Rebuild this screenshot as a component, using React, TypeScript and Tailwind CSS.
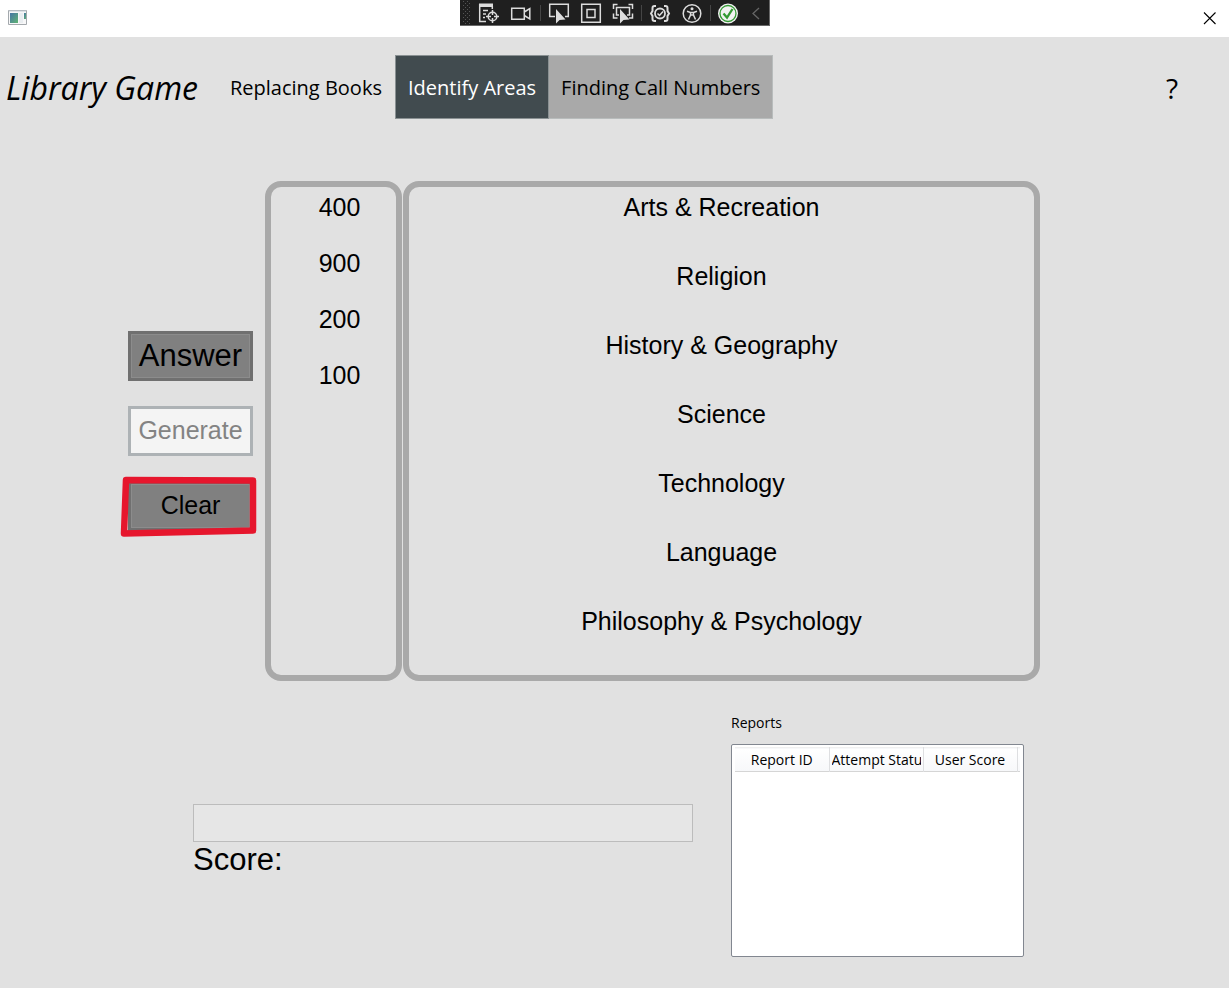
import React from "react";

const callNumbers = ["400", "900", "200", "100"];

const areas = [
  "Arts & Recreation",
  "Religion",
  "History & Geography",
  "Science",
  "Technology",
  "Language",
  "Philosophy & Psychology",
];

const columns = ["Report ID", "Attempt Status", "User Score"];

const segoe = "font-['Open_Sans','Noto_Sans',sans-serif]";
const arial = "font-['Liberation_Sans',Arial,sans-serif]";

function ToolButton({ label, children }: { label: string; children: React.ReactNode }) {
  return (
    <button type="button" aria-label={label} className="flex h-6 w-8 items-center justify-center">
      <svg width="24" height="24" viewBox="0 0 24 24" fill="none" stroke="#dcdcdc" strokeWidth="1.5">
        {children}
      </svg>
    </button>
  );
}

function Separator() {
  return (
    <span className="flex h-4 w-[5px] shrink-0 justify-center">
      <span className="w-px bg-[#454545]" />
    </span>
  );
}

function Grip() {
  const rows = [2, 6, 10, 14, 18, 22];
  return (
    <svg className="h-6 w-3.5 shrink-0" viewBox="0 0 14 24" fill="#555555" aria-hidden="true">
      {rows.map((y) => (
        <g key={y}>
          <rect x="3" y={y - 2} width="1" height="1" />
          <rect x="7" y={y - 2} width="1" height="1" />
          <rect x="5" y={y} width="1" height="1" />
          <rect x="9" y={y} width="1" height="1" />
        </g>
      ))}
    </svg>
  );
}

const cursor = "M9 8V22.5L12.5 19L18.5 18.5Z";

function DebugToolbar() {
  return (
    <div
      role="toolbar"
      aria-label="Debug tools"
      className="flex h-[26px] items-center border-r border-b border-[#686868] bg-[#1f1f1f]"
    >
      <Grip />
      <ToolButton label="Go to live visual tree">
        <path d="M1 2.500H15V6H1Z" fill="#dcdcdc" stroke="none" />
        <path d="M1.700 3V20.500H8M5 9.500H10M5 13H8M5 16.500H7M14.300 5V8" />
        <circle cx="14.500" cy="15.500" r="4.300" />
        <path d="M14.500 9V14M14.500 17V22M8 15.500H13M16 15.500H21" />
      </ToolButton>
      <ToolButton label="Record">
        <path d="M1.700 7.200H14.300V18.300H1.700ZM14.300 11L19.800 7.500V18L14.300 14.500" />
      </ToolButton>
      <Separator />
      <ToolButton label="Select element">
        <path d="M8 15.500H2.700V3.200H21.300V15.500H18" />
        <path d={cursor} fill="#dcdcdc" stroke="none" />
      </ToolButton>
      <ToolButton label="Display layout adorners">
        <path d="M2.700 3.200H21.300V21.300H2.700ZM8 8.500H16V16.500H8Z" />
      </ToolButton>
      <ToolButton label="Track focused element">
        <path d="M2.500 8V3.500H6.500M17.500 3.500H21.500V8M2.500 12.500V17H6.500M18 17H21.500V12.500M8 14H5.500V6.500H18.500V14H16" />
        <path d={cursor} fill="#dcdcdc" stroke="none" />
      </ToolButton>
      <Separator />
      <ToolButton label="Binding failures">
        <path
          d="M8 5H6.500Q4.500 5 4.500 7V10L3 12.500L4.500 15V18Q4.500 20 6.500 20H8M16 5H17.500Q19.500 5 19.500 7V10L21 12.500L19.500 15V18Q19.500 20 17.500 20H16"
          strokeWidth="2"
        />
        <circle cx="12" cy="12.500" r="5" strokeWidth="1.800" />
        <path d="M9.500 12.500L11.500 14.500L15 10.500" />
      </ToolButton>
      <ToolButton label="Scan for accessibility issues">
        <circle cx="12" cy="12.500" r="8.800" />
        <circle cx="12" cy="7.700" r="1.500" fill="#dcdcdc" stroke="none" />
        <path d="M7 10.200L10.500 11.500V14L8.500 18.500M17 10.200L13.500 11.500V14L15.500 18.500M10.500 11.500H13.500M10.500 14H13.500" />
      </ToolButton>
      <Separator />
      <ToolButton label="Hot reload">
        <circle cx="11" cy="12.500" r="10" fill="#f2f2f2" stroke="none" />
        <circle cx="11" cy="12.500" r="8" stroke="#339933" strokeWidth="1.300" />
        <path d="M6.500 12.500L10 16.500L15.500 8" stroke="#339933" strokeWidth="2.300" />
      </ToolButton>
      <button type="button" aria-label="Collapse toolbar" className="flex h-6 w-6 items-center justify-center">
        <svg width="12" height="14" viewBox="0 0 12 14" fill="none" stroke="#666666" strokeWidth="1.3">
          <path d="M8 2L2 7.500L8 13" />
        </svg>
      </button>
    </div>
  );
}

function TitleBar() {
  return (
    <div className="grid h-[37px] grid-cols-[1fr_auto_1fr] bg-white">
      <svg className="mt-2.5 ml-2" width="20" height="16" viewBox="0 0 20 16" aria-hidden="true">
        <defs>
          <linearGradient id="pane" x1="0" y1="0" x2="1" y2="1">
            <stop offset="0" stopColor="#4675a5" />
            <stop offset="1" stopColor="#60b473" />
          </linearGradient>
        </defs>
        <path d="M0.500 0.500H18.500V14.500H0.500Z" fill="#f7f7f8" stroke="#a4a9ad" />
        <path d="M1 1H18" stroke="#c5cdd4" />
        <rect x="2" y="3" width="8" height="10" fill="url(#pane)" />
        <rect x="11" y="3" width="4" height="10" fill="#e9edf0" />
        <rect x="16" y="3" width="2" height="6" fill="url(#pane)" />
      </svg>
      <DebugToolbar />
      <button type="button" aria-label="Close" className="mt-3 mr-3 h-3.5 w-3.5 justify-self-end">
        <svg width="14" height="14" viewBox="0 0 14 14" stroke="#000000" strokeWidth="1.1">
          <path d="M1 0.500L12.500 12M12.500 0.500L1 12" />
        </svg>
      </button>
    </div>
  );
}

const navItem = "h-full px-3 pt-0.5 text-xl leading-8 whitespace-nowrap";

function Header() {
  return (
    <header className={`mt-[18px] flex h-16 items-center ${segoe}`}>
      <h1 className="ml-1.5 w-[212px] pt-0.5 text-[32px] leading-10 whitespace-nowrap italic">Library Game</h1>
      <nav className="flex h-full">
        <button type="button" className={`${navItem} pr-[13px]`}>
          Replacing Books
        </button>
        <button
          type="button"
          aria-current="page"
          className={`${navItem} border border-[#8a9193] bg-[#414b4f] text-white`}
        >
          Identify Areas
        </button>
        <button type="button" className={`${navItem} border border-l-0 border-[#b8bcbc] bg-[#a9a9a9]`}>
          Finding Call Numbers
        </button>
      </nav>
      <button type="button" aria-label="Help" className="mr-[51px] ml-auto pt-0.5 text-[28px] leading-8">
        ?
      </button>
    </header>
  );
}

const actionButton = "flex h-[50px] w-full items-center justify-center border-[3px]";
const darkButton = "border-[#707070] bg-[#808080] inset-shadow-[0_0_0_1px_#8c8c8c]";
const panel = "flex flex-col items-center rounded-2xl border-[6px] border-[#a9a9a9] pt-1.5 text-[25px] leading-7";

function Board() {
  return (
    <section className={`mt-[62px] mr-[189px] ml-[128px] flex h-[500px] ${arial}`}>
      <div className="mr-3 flex w-[125px] shrink-0 flex-col gap-[25px] pt-[150px]">
        <button type="button" className={`${actionButton} ${darkButton} text-[31px]`}>
          Answer
        </button>
        <button
          type="button"
          disabled
          className={`${actionButton} border-[#adb2b5] bg-[#f4f4f4] text-[25px] text-[#838383]`}
        >
          Generate
        </button>
        <div className="relative">
          <button type="button" className={`${actionButton} ${darkButton} text-[25px]`}>
            Clear
          </button>
          <svg
            className="pointer-events-none absolute -top-2 -left-2"
            width="141"
            height="66"
            viewBox="0 0 141 66"
            fill="none"
            stroke="#e6162d"
            strokeWidth="6.5"
            strokeLinejoin="round"
            aria-hidden="true"
          >
            <path d="M6 7L133 7.500V57.500L4 60.500Z" />
          </svg>
        </div>
      </div>
      <ul className={`${panel} w-[137px] shrink-0 gap-7 pl-3`}>
        {callNumbers.map((value) => (
          <li key={value}>{value}</li>
        ))}
      </ul>
      <ul className={`${panel} ml-px min-w-0 flex-1 gap-[41px]`}>
        {areas.map((area) => (
          <li key={area}>{area}</li>
        ))}
      </ul>
    </section>
  );
}

function Results() {
  return (
    <section className="mt-8 mr-[205px] ml-[193px] flex">
      <div className={`mt-[91px] min-w-0 flex-1 ${arial}`}>
        <div
          role="progressbar"
          aria-label="Score progress"
          aria-valuenow={0}
          className="h-[38px] border border-[#bcbcbc] bg-[#e6e6e6]"
        />
        <p className="text-[31px] leading-9">Score:</p>
      </div>
      <div className={`ml-[38px] w-[293px] shrink-0 ${segoe}`}>
        <h2 className="text-sm leading-5">Reports</h2>
        <div className="mt-[11px] h-[213px] rounded-xs border border-[#828790] bg-white px-[3px] pt-0.5">
          <table className="w-full table-fixed border-collapse text-sm" aria-label="Reports">
            <thead>
              <tr className="h-6 border-t border-b border-t-[#f0f0f0] border-b-[#d5d5d5] bg-linear-to-b from-white to-[#f7f8fa]">
                {columns.map((column) => (
                  <th key={column} scope="col" className="border-r border-[#dedfe1] px-0.5 font-normal">
                    <span className="block overflow-hidden leading-5 whitespace-nowrap">{column}</span>
                  </th>
                ))}
                <th aria-hidden="true" className="w-[3px]" />
              </tr>
            </thead>
            <tbody />
          </table>
        </div>
      </div>
    </section>
  );
}

export default function App() {
  return (
    <div className="min-h-screen bg-[#e1e1e1] pb-8 text-black">
      <TitleBar />
      <Header />
      <main>
        <Board />
        <Results />
      </main>
    </div>
  );
}
